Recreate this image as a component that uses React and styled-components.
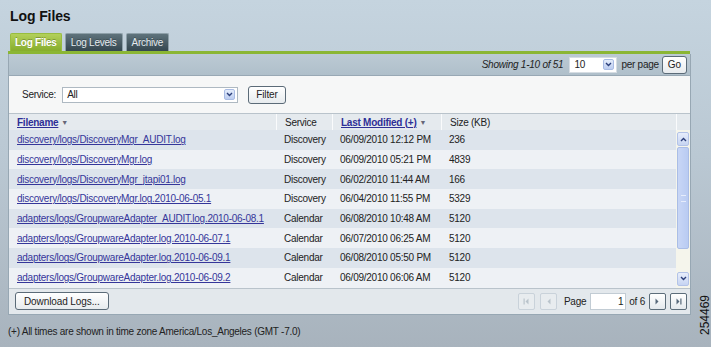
import React from 'react';
import styled, { createGlobalStyle } from 'styled-components';

const GlobalStyle = createGlobalStyle`
  html, body {
    margin: 0;
    padding: 0;
    height: 100%;
  }
  body {
    font-family: "Liberation Sans", Arial, sans-serif;
    font-size: 10px;
    letter-spacing: -0.25px;
    color: #222;
    background: linear-gradient(to bottom, #c5d4df 0%, #bac8d3 45%, #a8b3bd 100%);
    overflow: hidden;
  }
`;

const rows = [
  ['discovery/logs/DiscoveryMgr_AUDIT.log', 'Discovery', '06/09/2010 12:12 PM', '236'],
  ['discovery/logs/DiscoveryMgr.log', 'Discovery', '06/09/2010 05:21 PM', '4839'],
  ['discovery/logs/DiscoveryMgr_jtapi01.log', 'Discovery', '06/02/2010 11:44 AM', '166'],
  ['discovery/logs/DiscoveryMgr.log.2010-06-05.1', 'Discovery', '06/04/2010 11:55 PM', '5329'],
  ['adapters/logs/GroupwareAdapter_AUDIT.log.2010-06-08.1', 'Calendar', '06/08/2010 10:48 AM', '5120'],
  ['adapters/logs/GroupwareAdapter.log.2010-06-07.1', 'Calendar', '06/07/2010 06:25 AM', '5120'],
  ['adapters/logs/GroupwareAdapter.log.2010-06-09.1', 'Calendar', '06/08/2010 05:50 PM', '5120'],
  ['adapters/logs/GroupwareAdapter.log.2010-06-09.2', 'Calendar', '06/09/2010 06:06 AM', '5120'],
];

const Page = styled.div`
  position: relative;
  height: 347px;
  padding: 8px 20px 0 8px;
`;

const Title = styled.h1`
  margin: 0 0 0 2px;
  font-size: 14px;
  font-weight: bold;
  letter-spacing: -0.1px;
  color: #111;
  line-height: 17px;
`;

const Tabs = styled.div`
  display: flex;
  gap: 3px;
  margin: 8px 0 0 2px;
  height: 18px;
`;

const Tab = styled.div`
  display: flex;
  align-items: center;
  padding: 0 ${p => (p.active ? 4 : 5)}px;
  border-radius: 2px 2px 0 0;
  font-weight: ${p => (p.active ? 'bold' : 'normal')};
  color: ${p => (p.active ? '#fff' : '#e4ebef')};
  background: ${p =>
    p.active
      ? 'linear-gradient(to bottom, #b3d05a, #86ad2c)'
      : 'linear-gradient(to bottom, #5f737c, #34464f)'};
  border: 1px solid ${p => (p.active ? '#98bd3e' : '#8ea0a9')};
  border-bottom: none;
  text-shadow: 0 -1px 0 rgba(0, 0, 0, 0.25);
`;

const GreenBar = styled.div`
  height: 3px;
  background: #8bb634;
  width: 682px;
`;

const Panel = styled.div`
  width: 681px;
  border: 1px solid #97a7b3;
  border-top: none;
`;

const Toolbar = styled.div`
  display: flex;
  align-items: center;
  justify-content: flex-end;
  height: 21px;
  padding-right: 3px;
  background: linear-gradient(to bottom, #bccad4, #afbfca);
  border-bottom: 1px solid #98a8b4;
`;

const Showing = styled.span`
  font-style: italic;
  color: #222;
  margin-right: 6px;
`;

const Select = styled.div`
  display: flex;
  align-items: center;
  justify-content: space-between;
  box-sizing: border-box;
  width: ${p => p.w}px;
  height: 16px;
  padding: 0 2px 0 4px;
  background: #fff;
  border: 1px solid ${p => p.border || '#d6dde3'};
`;

const Arrow = styled.span`
  display: flex;
  align-items: center;
  justify-content: center;
  width: 11px;
  height: 11px;
  border-radius: 2px;
  background: linear-gradient(to bottom, #e4ecfb, #bccdf0);
  border: 1px solid #a9bce4;
  box-sizing: border-box;
`;

const PerPage = styled.span`
  margin: 0 3px 0 4px;
`;

const Button = styled.button`
  font-family: inherit;
  font-size: 10px;
  letter-spacing: -0.1px;
  color: #222;
  height: ${p => p.h || 18}px;
  padding: 0 ${p => p.px || 6}px;
  margin-left: ${p => p.ml || 0}px;
  border: 1px solid #5b6b78;
  border-radius: 3px;
  background: linear-gradient(to bottom, #ffffff, #e7ebee);
`;

const FilterBar = styled.div`
  display: flex;
  align-items: center;
  height: 37px;
  padding-left: 13px;
  background: #f6f7f7;
  border-bottom: 1px solid #b9c3cb;
`;

const Label = styled.span`
  margin-right: 6px;
`;

const TableWrap = styled.div`
  display: grid;
  grid-template-columns: 1fr 14px;
`;

const HeaderRow = styled.div`
  display: grid;
  grid-template-columns: 267px 56px 109px 1fr;
  height: 16px;
  background: #e5eaee;
`;

const HeaderCell = styled.div`
  display: flex;
  align-items: center;
  padding-left: 8px;
  border-left: ${p => (p.first ? 'none' : '1px solid #fafbfc')};
  color: #222;
`;

const HeaderLink = styled.a`
  color: #2e2f96;
  font-weight: bold;
  text-decoration: underline;
`;

const Caret = styled.span`
  color: #667;
  font-size: 7px;
  margin-left: 3px;
`;

const HeaderCorner = styled.div`
  background: #e5eaee;
  border-left: 1px solid #fafbfc;
`;

const Body = styled.div`
  display: flex;
  flex-direction: column;
`;

const Row = styled.div`
  display: grid;
  grid-template-columns: 267px 56px 109px 1fr;
  height: 19.7px;
  align-items: center;
  background: ${p => (p.odd ? '#eef1f5' : '#dde4ec')};
`;

const Cell = styled.div`
  padding-left: 8px;
  white-space: nowrap;
  overflow: hidden;
`;

const FileLink = styled.a`
  color: #35369a;
  text-decoration: underline;
`;

const Scrollbar = styled.div`
  display: flex;
  flex-direction: column;
  background: #f5f5ec;
  padding: 2px 1px;
  gap: 1px;
`;

const ScrollButton = styled.div`
  display: flex;
  align-items: center;
  justify-content: center;
  height: 12px;
  border-radius: 2px;
  background: linear-gradient(to bottom, #e8eefc, #c6d4f2);
  border: 1px solid #b3c3e8;
`;

const Thumb = styled.div`
  height: 100px;
  border-radius: 2px;
  background: linear-gradient(to right, #c8d6f6, #b9cbf2);
  border: 1px solid #aabde6;
  display: flex;
  align-items: center;
  justify-content: center;
`;

const Grip = styled.div`
  width: 5px;
  height: 5px;
  border-top: 1px solid #e6edfc;
  border-bottom: 1px solid #e6edfc;
`;

const Spacer = styled.div`
  flex: 1;
`;

const Footer = styled.div`
  display: flex;
  align-items: center;
  justify-content: space-between;
  height: 25px;
  padding: 0 3px 0 6px;
  background: #e3e8ec;
  border-top: 1px solid #b9c3cb;
`;

const Pager = styled.div`
  display: flex;
  align-items: center;
`;

const PagerButton = styled.div`
  display: flex;
  align-items: center;
  justify-content: center;
  width: 15px;
  height: 15px;
  margin-left: ${p => p.ml || 0}px;
  border-radius: 2px;
  border: 1px solid ${p => (p.disabled ? '#c9d2da' : '#5c6d7a')};
  background: ${p => (p.disabled ? '#e8ecef' : 'linear-gradient(to bottom, #ffffff, #e4e9ed)')};
`;

const PagerText = styled.span`
  margin-left: ${p => p.ml || 0}px;
`;

const PageInput = styled.div`
  box-sizing: border-box;
  width: 36px;
  height: 17px;
  margin: 0 3px 0 4px;
  padding-right: 2px;
  text-align: right;
  line-height: 15px;
  background: #fff;
  border: 1px solid #c2ccd4;
`;

const Note = styled.div`
  margin-top: 11px;
  color: #222;
`;

const FigureId = styled.div`
  position: absolute;
  right: -14px;
  top: 308px;
  transform: rotate(-90deg);
  font-size: 12px;
  letter-spacing: 0;
  color: #111;
`;

const Chevron = ({ up }) => (
  <svg width="7" height="5" viewBox="0 0 7 5">
    <path
      d={up ? 'M1 4 L3.5 1.5 L6 4' : 'M1 1 L3.5 3.5 L6 1'}
      fill="none"
      stroke="#2c3f7a"
      strokeWidth="1.4"
    />
  </svg>
);

const PagerIcon = ({ dir, end, disabled }) => {
  const c = disabled ? '#b9c3cb' : '#56687a';
  return (
    <svg width="9" height="9" viewBox="0 0 9 9">
      {dir === 'left' ? (
        <>
          {end && <rect x="1.5" y="1.5" width="1.2" height="6" fill={c} />}
          <path d="M3.5 4.5 L6.5 1.5 L6.5 7.5 Z" fill={c} />
        </>
      ) : (
        <>
          <path d="M2.5 1.5 L5.5 4.5 L2.5 7.5 Z" fill={c} />
          {end && <rect x="6.3" y="1.5" width="1.2" height="6" fill={c} />}
        </>
      )}
    </svg>
  );
};

const App = () => (
  <>
    <GlobalStyle />
    <Page>
      <Title>Log Files</Title>
      <Tabs>
        <Tab active>Log Files</Tab>
        <Tab>Log Levels</Tab>
        <Tab>Archive</Tab>
      </Tabs>
      <GreenBar />
      <Panel>
        <Toolbar>
          <Showing>Showing 1-10 of 51</Showing>
          <Select w={48}>
            10
            <Arrow><Chevron /></Arrow>
          </Select>
          <PerPage>per page</PerPage>
          <Button h={18} px={5}>Go</Button>
        </Toolbar>
        <FilterBar>
          <Label>Service:</Label>
          <Select w={176} border="#aeb9c2">
            All
            <Arrow><Chevron /></Arrow>
          </Select>
          <Button h={18} px={7} ml={10}>Filter</Button>
        </FilterBar>
        <TableWrap>
          <HeaderRow>
            <HeaderCell first>
              <HeaderLink>Filename</HeaderLink>
              <Caret>▼</Caret>
            </HeaderCell>
            <HeaderCell>Service</HeaderCell>
            <HeaderCell>
              <HeaderLink>Last Modified (+)</HeaderLink>
              <Caret>▼</Caret>
            </HeaderCell>
            <HeaderCell>Size (KB)</HeaderCell>
          </HeaderRow>
          <HeaderCorner />
          <Body>
            {rows.map((r, i) => (
              <Row key={r[0]} odd={i % 2 === 1}>
                <Cell><FileLink>{r[0]}</FileLink></Cell>
                <Cell>{r[1]}</Cell>
                <Cell>{r[2]}</Cell>
                <Cell>{r[3]}</Cell>
              </Row>
            ))}
          </Body>
          <Scrollbar>
            <ScrollButton><Chevron up /></ScrollButton>
            <Thumb><Grip /></Thumb>
            <Spacer />
            <ScrollButton><Chevron /></ScrollButton>
          </Scrollbar>
        </TableWrap>
        <Footer>
          <Button h={18} px={8}>Download Logs...</Button>
          <Pager>
            <PagerButton disabled><PagerIcon dir="left" end disabled /></PagerButton>
            <PagerButton disabled ml={5}><PagerIcon dir="left" disabled /></PagerButton>
            <PagerText ml={7}>Page</PagerText>
            <PageInput>1</PageInput>
            <PagerText>of 6</PagerText>
            <PagerButton ml={4}><PagerIcon dir="right" /></PagerButton>
            <PagerButton ml={4}><PagerIcon dir="right" end /></PagerButton>
          </Pager>
        </Footer>
      </Panel>
      <Note>(+) All times are shown in time zone America/Los_Angeles (GMT -7.0)</Note>
      <FigureId>254469</FigureId>
    </Page>
  </>
);

export default App;
